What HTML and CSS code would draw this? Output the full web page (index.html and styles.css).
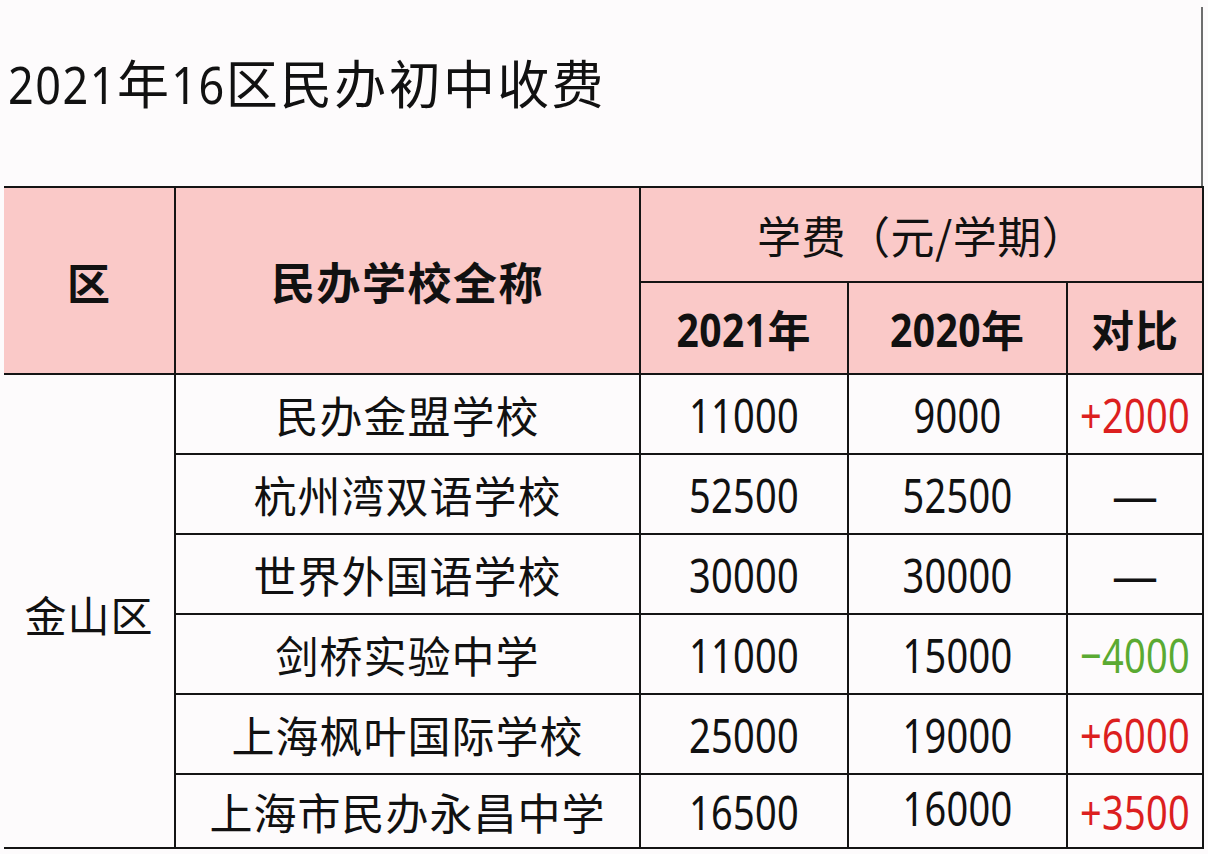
FILE: index.html
```html
<!DOCTYPE html>
<html lang="zh-CN">
<head>
<meta charset="utf-8">
<title>2021年16区民办初中收费</title>
<link rel="stylesheet" href="styles.css">
</head>
<body>
<div class="sheet">
  <div class="titlebar">
    <h1 class="title"><span class="d">2021</span>年<span class="d">16</span>区民办初中收费</h1>
  </div>
  <table class="fees">
    <colgroup>
      <col class="col-dist">
      <col class="col-name">
      <col class="col-y21">
      <col class="col-y20">
      <col class="col-diff">
    </colgroup>
    <thead>
      <tr class="hrow1">
        <th rowspan="2" class="first">区</th>
        <th rowspan="2" class="name-head">民办学校全称</th>
        <th colspan="3" class="fee-head">学费（元/学期）</th>
      </tr>
      <tr class="hrow2">
        <th><span class="hd">2021</span>年</th>
        <th><span class="hd">2020</span>年</th>
        <th>对比</th>
      </tr>
    </thead>
    <tbody>
      <tr>
        <td rowspan="6" class="first dist">金山区</td>
        <td class="name">民办金盟学校</td>
        <td><span class="n">11000</span></td>
        <td><span class="n">9000</span></td>
        <td class="up"><span class="n">+2000</span></td>
      </tr>
      <tr>
        <td class="name">杭州湾双语学校</td>
        <td><span class="n">52500</span></td>
        <td><span class="n">52500</span></td>
        <td class="same">—</td>
      </tr>
      <tr>
        <td class="name">世界外国语学校</td>
        <td><span class="n">30000</span></td>
        <td><span class="n">30000</span></td>
        <td class="same">—</td>
      </tr>
      <tr>
        <td class="name">剑桥实验中学</td>
        <td><span class="n">11000</span></td>
        <td><span class="n">15000</span></td>
        <td class="down"><span class="n">−4000</span></td>
      </tr>
      <tr>
        <td class="name">上海枫叶国际学校</td>
        <td><span class="n">25000</span></td>
        <td><span class="n">19000</span></td>
        <td class="up"><span class="n">+6000</span></td>
      </tr>
      <tr class="last">
        <td class="name">上海市民办永昌中学</td>
        <td><span class="n">16500</span></td>
        <td><span class="n raised">16000</span></td>
        <td class="up"><span class="n">+3500</span></td>
      </tr>
    </tbody>
  </table>
</div>
</body>
</html>
```

FILE: styles.css
```css
html, body {
  margin: 0;
  padding: 0;
  background: #fdfbfc;
}

body {
  width: 1208px;
  height: 854px;
  overflow: hidden;
  font-family: "Noto Sans CJK SC", "Noto Sans", sans-serif;
  color: #111;
}

.sheet {
  padding-left: 4px;
}

.titlebar {
  width: 1197px;
  height: 179px;
  margin-top: 7px;
  border-right: 2px solid #6e6e6e;
}

.title {
  margin: 0;
  padding-top: 45px;
  padding-left: 4px;
  font-weight: 400;
  font-size: 52px;
  line-height: 60px;
  letter-spacing: 2.3px;
  color: #111;
}

.title .d {
  display: inline-block;
  font-family: "Noto Sans", sans-serif;
  font-size: 45px;
  line-height: 1;
  letter-spacing: 1.5px;
  transform: scaleY(1.15);
  transform-origin: 50% 88.8%;
}

.fees {
  width: 1199px;
  border-collapse: collapse;
  table-layout: fixed;
}

.col-dist { width: 171px; }
.col-name { width: 465px; }
.col-y21 { width: 208px; }
.col-y20 { width: 219px; }
.col-diff { width: 136px; }

.fees th,
.fees td {
  border: 2px solid #141414;
  padding: 0;
  text-align: center;
  vertical-align: middle;
  font-size: 43px;
  letter-spacing: 1px;
  white-space: nowrap;
}

.fees .first {
  border-left: none;
}

.fees thead th {
  background: #fac9c8;
  font-weight: 700;
}

.hrow1 th { height: 93px; }
.hrow2 th { height: 90px; }

.fees thead .name-head {
  font-size: 44px;
  letter-spacing: 1.5px;
}

.fees thead .fee-head {
  font-weight: 400;
  font-size: 44px;
  letter-spacing: 0.5px;
}

.fees thead .hd {
  display: inline-block;
  font-family: "Noto Sans", sans-serif;
  font-size: 39px;
  line-height: 1;
  letter-spacing: 0.5px;
  transform: scaleY(1.18);
  transform-origin: 50% 88.8%;
}

.fees tbody td {
  height: 78px;
  background: #fdfbfc;
}

.fees tbody tr.last td {
  height: 72px;
}

.fees .n {
  display: inline-block;
  font-family: "Noto Sans", sans-serif;
  font-size: 38px;
  line-height: 1;
  letter-spacing: 0.3px;
  transform: translateY(-4px) scaleY(1.26);
  transform-origin: 50% 50%;
}

.fees .n.raised {
  position: relative;
  top: -4px;
}

.fees td.dist {
  font-size: 42px;
  padding-top: 4px;
}

.fees td.up { color: #dc1f1f; }
.fees td.down { color: #5aaa32; }

.fees td.same {
  font-family: "Noto Sans", sans-serif;
  font-size: 46px;
  letter-spacing: 0;
}
```
